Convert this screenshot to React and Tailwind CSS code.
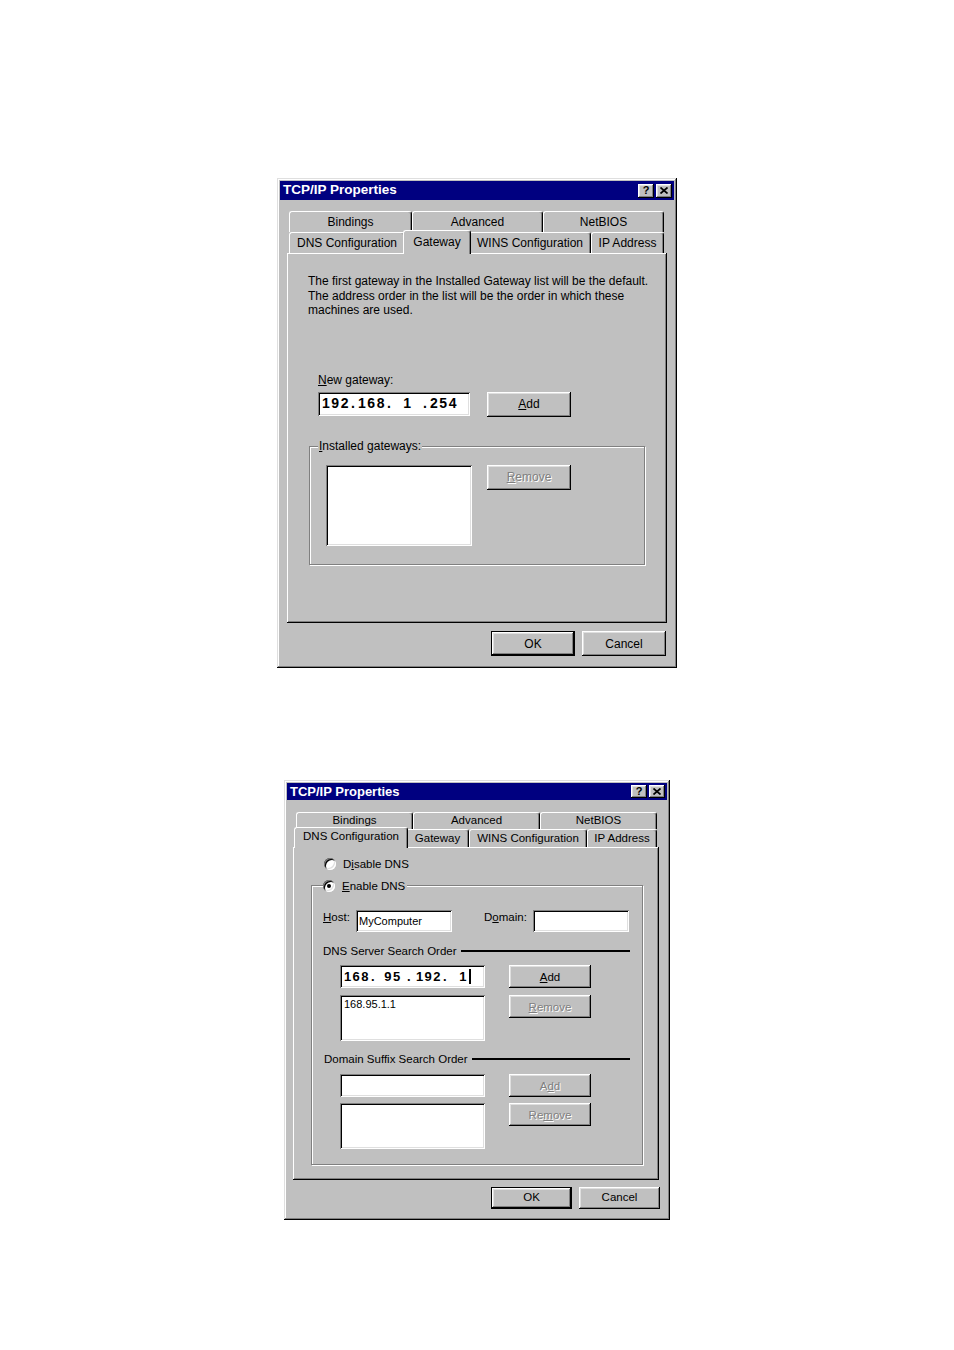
import React from 'react';
import clsx from 'clsx';

const raised =
  'shadow-[inset_-1px_-1px_0_#000,inset_1px_1px_0_#fff,inset_-2px_-2px_0_#808080,inset_2px_2px_0_#dfdfdf]';
const frame =
  'shadow-[inset_-1px_-1px_0_#000,inset_1px_1px_0_#dfdfdf,inset_-2px_-2px_0_#808080,inset_2px_2px_0_#fff]';
const sunken =
  'bg-white shadow-[inset_1px_1px_0_#808080,inset_-1px_-1px_0_#fff,inset_2px_2px_0_#000,inset_-2px_-2px_0_#dfdfdf]';
const panel = 'shadow-[inset_-1px_-1px_0_#000,inset_1px_1px_0_#fff,inset_-2px_-2px_0_#808080]';
const etched = 'border border-[#808080] shadow-[inset_1px_1px_0_#fff,1px_1px_0_#fff]';
const greyed = 'text-[#808080] [text-shadow:1px_1px_0_#fff]';

const Button = ({ className, disabled, isDefault, children }) => (
  <div
    className={clsx(
      'flex items-center justify-center bg-[#c0c0c0]',
      raised,
      isDefault && 'border border-black',
      disabled && greyed,
      className
    )}
  >
    {children}
  </div>
);

const Tab = ({ className, selected, children }) => (
  <div
    className={clsx(
      'flex items-center justify-center rounded-t-[3px] border-l border-t border-r border-white border-r-black bg-[#c0c0c0] shadow-[inset_-1px_0_0_#808080]',
      selected && 'relative z-10 -mx-[2px] -mb-px pb-[2px]',
      className
    )}
  >
    {children}
  </div>
);

const Radio = ({ checked }) => (
  <div className="relative h-[12px] w-[12px] shrink-0 rounded-full bg-white shadow-[inset_1px_1px_0_#808080,inset_-1px_-1px_0_#fff,inset_2px_2px_0_#000,inset_-2px_-2px_0_#dfdfdf]">
    {checked && <div className="absolute left-[4px] top-[4px] h-[4px] w-[4px] rounded-full bg-black" />}
  </div>
);

const CloseGlyph = () => (
  <svg width="8" height="7" viewBox="0 0 8 7">
    <path d="M0.5 0.5 L7.5 6.5 M7.5 0.5 L0.5 6.5" stroke="#000" strokeWidth="1.7" />
  </svg>
);

const TitleBar = ({ className, btn }) => (
  <div className={clsx('flex items-center justify-between bg-[#000080] pl-[3px] pr-[2px]', className)}>
    <span className="font-bold text-white">TCP/IP Properties</span>
    <div className="flex gap-[2px]">
      <div className={clsx('flex items-center justify-center bg-[#c0c0c0] text-[11px] font-bold leading-none text-black', raised, btn)}>?</div>
      <div className={clsx('flex items-center justify-center bg-[#c0c0c0]', raised, btn)}>
        <CloseGlyph />
      </div>
    </div>
  </div>
);

// IP address edit control: four octet cells with dots between
const IpField = ({ octets, cell, dot, caret }) => (
  <>
    {octets.map((o, i) => (
      <React.Fragment key={i}>
        <span className={clsx('flex items-center justify-center', cell)}>
          {o}
          {caret && i === 3 && <span className="ml-[1px] inline-block h-[15px] w-[2px] bg-black" />}
        </span>
        {i < 3 && <span className={dot}>.</span>}
      </React.Fragment>
    ))}
  </>
);

const GatewayDialog = () => (
  <div className={clsx('ml-[277px] flex h-[490px] w-[400px] flex-col bg-[#c0c0c0] p-[3px]', frame)}>
    <TitleBar className="h-[19px] text-[13.5px]" btn="h-[14px] w-[16px]" />
    <div className="px-[7px] pt-[11px]">
      <div className="ml-[2px] flex h-[21px] text-[12px]">
        <Tab className="h-full w-[123px]">Bindings</Tab>
        <Tab className="h-full w-[131px]">Advanced</Tab>
        <Tab className="h-full w-[121px]">NetBIOS</Tab>
      </div>
      <div className="ml-[2px] flex h-[21px] items-end text-[12px]">
        <Tab className="h-full w-[116px]">DNS Configuration</Tab>
        <Tab selected className="h-[24px] w-[68px]">Gateway</Tab>
        <Tab className="h-full w-[122px]">WINS Configuration</Tab>
        <Tab className="h-full w-[73px]">IP Address</Tab>
      </div>

      {/* tab body */}
      <div className={clsx('h-[370px] w-[380px] pl-[21px] pt-[21px] text-[12px]', panel)}>
        <p className="leading-[14.5px]">
          The first gateway in the Installed Gateway list will be the default.
          <br />
          The address order in the list will be the order in which these
          <br />
          machines are used.
        </p>
        <div className="ml-[10px] mt-[55px] leading-[14px]">
          <u>N</u>ew gateway:
        </div>
        <div className="ml-[10px] mt-[5px] flex items-start gap-[17px]">
          <div className={clsx('flex h-[24px] w-[152px] items-center pl-[3px] text-[14px] font-bold tracking-[1.5px]', sunken)}>
            <IpField octets={['192', '168', '1', '254']} cell="w-[30px]" dot="w-[6px]" />
          </div>
          <Button className="h-[25px] w-[84px]">
            <u>A</u>dd
          </Button>
        </div>
        <div className={clsx('relative ml-[1px] mt-[29px] h-[119px] w-[336px] pl-[16px] pt-[18px]', etched)}>
          <span className="absolute -top-[8px] left-[8px] bg-[#c0c0c0] px-px leading-[14px]">
            <u>I</u>nstalled gateways:
          </span>
          <div className="flex items-start gap-[15px]">
            <div className={clsx('h-[81px] w-[146px]', sunken)} />
            <Button disabled className="h-[25px] w-[84px]">
              <u>R</u>emove
            </Button>
          </div>
        </div>
      </div>

      <div className="ml-[204px] mt-[8px] flex gap-[7px] text-[12px]">
        <Button isDefault className="h-[25px] w-[84px]">OK</Button>
        <Button className="h-[25px] w-[84px]">Cancel</Button>
      </div>
    </div>
  </div>
);

const SearchHeader = ({ className, children }) => (
  <div className={clsx('flex h-[14px] items-center', className)}>
    <span>{children}</span>
    <div className="ml-[4px] h-[2px] flex-1 bg-black" />
  </div>
);

const DnsDialog = () => (
  <div className={clsx('ml-[284px] mt-[112px] flex h-[440px] w-[386px] flex-col bg-[#c0c0c0] p-[3px]', frame)}>
    <TitleBar className="h-[17px] text-[13px]" btn="h-[13px] w-[16px]" />
    <div className="pl-[6px] pt-[12px]">
      <div className="ml-[3px] flex h-[17px] text-[11.5px]">
        <Tab className="h-full w-[117px]">Bindings</Tab>
        <Tab className="h-full w-[127px]">Advanced</Tab>
        <Tab className="h-full w-[117px]">NetBIOS</Tab>
      </div>
      <div className="ml-[3px] flex h-[18px] items-end text-[11.5px]">
        <Tab selected className="h-[21px] w-[114px]">DNS Configuration</Tab>
        <Tab className="h-full w-[63px]">Gateway</Tab>
        <Tab className="h-full w-[118px]">WINS Configuration</Tab>
        <Tab className="h-full w-[70px]">IP Address</Tab>
      </div>

      {/* tab body */}
      <div className={clsx('h-[333px] w-[366px] pt-[10px] text-[11.5px] leading-[14px]', panel)}>
        <div className="ml-[31px] flex h-[14px] items-center gap-[7px]">
          <Radio />
          <span>
            D<u>i</u>sable DNS
          </span>
        </div>
        <div className={clsx('relative ml-[18px] mt-[14px] h-[280px] w-[332px] pl-[11px] pr-[12px] pt-[24px]', etched)}>
          <div className="absolute -top-[7px] left-[11px] flex h-[14px] items-center gap-[7px] bg-[#c0c0c0] pr-[2px]">
            <Radio checked />
            <span>
              <u>E</u>nable DNS
            </span>
          </div>

          <div className="flex h-[22px] items-start">
            <span className="w-[33px]">
              <u>H</u>ost:
            </span>
            <div className={clsx('flex h-[22px] w-[96px] items-center pl-[3px] text-[11px]', sunken)}>MyComputer</div>
            <span className="ml-[32px] w-[49px]">
              D<u>o</u>main:
            </span>
            <div className={clsx('h-[22px] w-[96px]', sunken)} />
          </div>

          <SearchHeader className="mt-[12px]">DNS Server Search Order</SearchHeader>
          <div className="ml-[17px] mt-[7px] flex items-start gap-[24px]">
            <div className={clsx('flex h-[23px] w-[145px] items-center pl-[3px] text-[13px] font-bold tracking-[1.5px]', sunken)}>
              <IpField octets={['168', '95', '192', '1']} cell="w-[28px]" dot="w-[8px]" caret />
            </div>
            <Button className="h-[23px] w-[82px]">
              <u>A</u>dd
            </Button>
          </div>
          <div className="ml-[17px] mt-[7px] flex items-start gap-[24px]">
            <div className={clsx('h-[46px] w-[145px] pl-[4px] pt-[2px] text-[11px]', sunken)}>168.95.1.1</div>
            <Button disabled className="h-[23px] w-[82px]">
              <u>R</u>emove
            </Button>
          </div>

          <SearchHeader className="ml-px mt-[11px]">Domain Suffix Search Order</SearchHeader>
          <div className="ml-[17px] mt-[8px] flex items-start gap-[24px]">
            <div className={clsx('h-[23px] w-[145px]', sunken)} />
            <Button disabled className="h-[23px] w-[82px]">
              A<u>d</u>d
            </Button>
          </div>
          <div className="ml-[17px] mt-[6px] flex items-start gap-[24px]">
            <div className={clsx('h-[46px] w-[145px]', sunken)} />
            <Button disabled className="h-[23px] w-[82px]">
              Re<u>m</u>ove
            </Button>
          </div>
        </div>
      </div>

      <div className="ml-[198px] mt-[7px] flex gap-[7px] text-[11.5px]">
        <Button isDefault className="h-[22px] w-[81px]">OK</Button>
        <Button className="h-[22px] w-[81px]">Cancel</Button>
      </div>
    </div>
  </div>
);

export default function App() {
  return (
    <div className="min-h-[1350px] bg-white pt-[178px] font-['Liberation_Sans',Arial,sans-serif] text-black">
      <GatewayDialog />
      <DnsDialog />
    </div>
  );
}
